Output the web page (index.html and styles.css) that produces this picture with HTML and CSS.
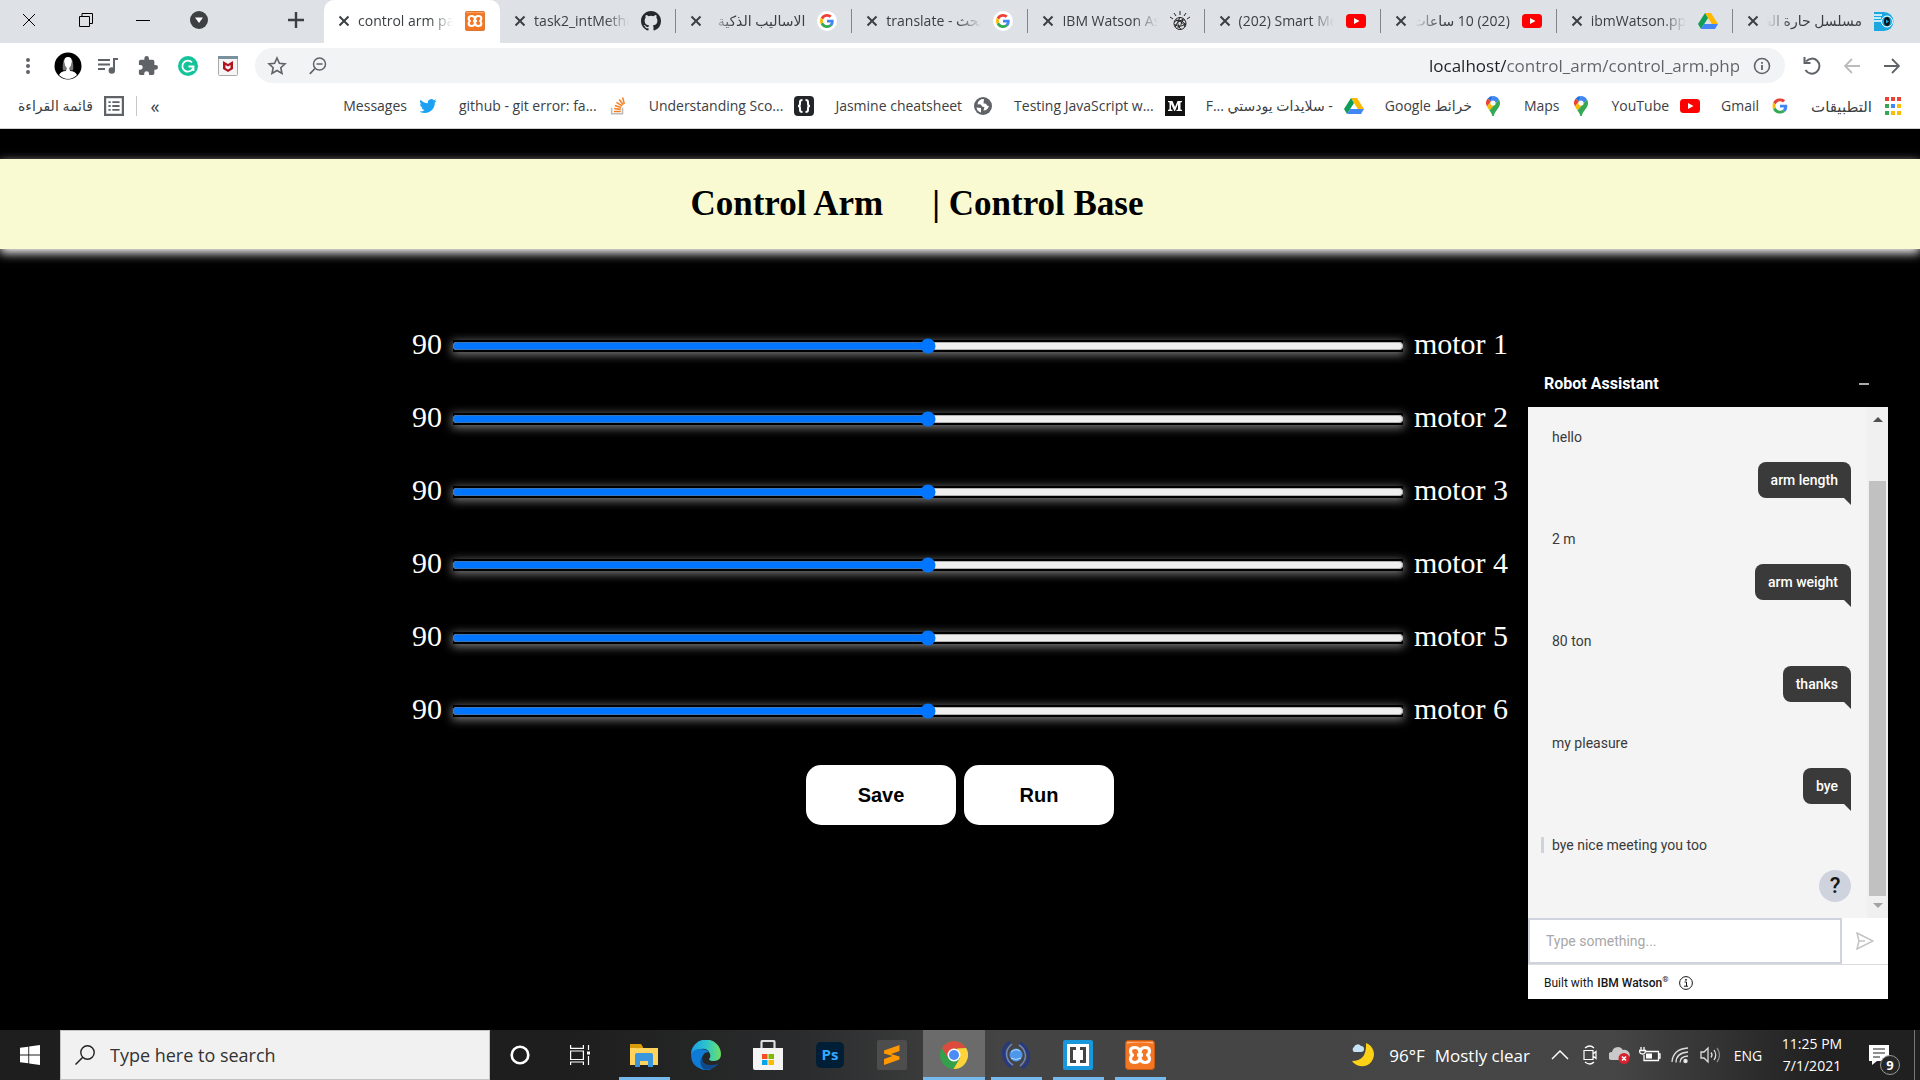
FILE: index.html
```html
<!DOCTYPE html>
<html lang="en">
<head>
<meta charset="utf-8">
<title>control arm page</title>
<link rel="stylesheet" href="styles.css">
</head>
<body>
<svg class="sprite" aria-hidden="true">
  <symbol id="i-close" viewBox="0 0 12 12"><path d="M1.5 1.5l9 9M10.500 1.500l-9 9" stroke="#3c4043" stroke-width="2" fill="none"/></symbol>
  <symbol id="i-google" viewBox="0 0 48 48"><path fill="#ea4335" d="M24 9.500c3.540 0 6.710 1.220 9.210 3.600l6.850-6.850C35.900 2.380 30.470 0 24 0 14.620 0 6.510 5.380 2.560 13.220l7.980 6.190C12.430 13.720 17.740 9.500 24 9.500z"/><path fill="#4285f4" d="M46.980 24.550c0-1.570-.15-3.090-.38-4.550H24v9.020h12.940c-.58 2.960-2.260 5.480-4.780 7.180l7.730 6c4.510-4.180 7.090-10.360 7.090-17.650z"/><path fill="#fbbc05" d="M10.530 28.590c-.48-1.450-.76-2.990-.76-4.590s.27-3.140.76-4.590l-7.980-6.190C.92 16.460 0 20.120 0 24c0 3.880.92 7.540 2.560 10.780l7.970-6.190z"/><path fill="#34a853" d="M24 48c6.480 0 11.930-2.130 15.890-5.810l-7.730-6c-2.150 1.450-4.920 2.300-8.160 2.300-6.260 0-11.570-4.220-13.470-9.910l-7.980 6.190C6.510 42.620 14.620 48 24 48z"/></symbol>
  <symbol id="i-gtab" viewBox="0 0 20 20"><circle cx="10" cy="10" r="10" fill="#fff"/><use href="#i-google" x="3" y="3" width="14" height="14"/></symbol>
  <symbol id="i-youtube" viewBox="0 0 20 20"><rect y="3" width="20" height="14" rx="3.500" fill="#f00"/><path d="M8 7l5.500 3L8 13z" fill="#fff"/></symbol>
  <symbol id="i-drive" viewBox="0 0 20 18"><path d="M7 1h6l7 11h-6.200z" fill="#ffba00"/><path d="M7 1L0 12l3 5L10 6z" fill="#0f9d58"/><path d="M6.200 12H20l-3 5H3z" fill="#4285f4"/></symbol>
  <symbol id="i-pin" viewBox="0 0 20 20"><path d="M10 0a7 7 0 0 0-5.300 2.400L8 5.500z" fill="#1a73e8"/><path d="M4.700 2.400A7 7 0 0 0 4 10.500L8 5.500z" fill="#ea4335"/><path d="M10 0a7 7 0 0 1 6 3.500L12 8.200 8 5.500z" fill="#4285f4"/><path d="M4 10.500l4-5 4 2.700-5.500 6.300C5.600 13.200 4.500 11.800 4 10.500z" fill="#fbbc04"/><path d="M16 3.500c2 3.500.8 6.500-1 9-2 2.800-3.500 4-4.200 7.500h-1.500c-.5-2.500-1.600-4-2.800-5.500z" fill="#34a853"/><circle cx="10" cy="7" r="2.600" fill="#fff"/></symbol>
  <symbol id="i-xampp" viewBox="0 0 30 30"><rect x=".5" y=".5" width="29" height="29" rx="3" fill="#f37623" stroke="#c65a10"/><path d="M2 2h26v1.500q-13-2-26 0z" fill="#ffb98a"/><path d="M15 13.500q0-6-5-6-4.500 0-4.500 3.700 0 2.300 2 3.800-2 1.500-2 3.800 0 3.700 4.500 3.700 5 0 5-6 0 6 5 6 4.500 0 4.500-3.700 0-2.300-2-3.800 2-1.500 2-3.800 0-3.700-4.500-3.700-5 0-5 6z" fill="none" stroke="#fff" stroke-width="3.200" stroke-linejoin="round"/><path d="M12 13.300h6v3.400h-6z" fill="#fff"/></symbol>
</svg>

<header class="browser">
  <div class="tabstrip">
    <div class="window-buttons">
      <button aria-label="Close window"><svg width="14" height="14" viewBox="0 0 14 14"><path d="M1 1l12 12M13 1L1 13" stroke="#000" fill="none"/></svg></button>
      <button aria-label="Restore"><svg width="14" height="14" viewBox="0 0 14 14"><path d="M.5 3.500h10v10H.5zM3 3.500V.5h10.500v10H11" stroke="#000" fill="none"/></svg></button>
      <button aria-label="Minimize"><svg width="14" height="14" viewBox="0 0 14 14"><path d="M0 7.500h14" stroke="#000"/></svg></button>
      <button class="search-tabs" aria-label="Search tabs"><svg width="18" height="18" viewBox="0 0 18 18"><circle cx="9" cy="9" r="9" fill="#3c4043"/><path d="M5 6.500h8L9 12z" fill="#fff"/></svg></button>
      <button class="new-tab" aria-label="New tab"><svg width="16" height="16" viewBox="0 0 16 16"><path d="M8 0v16M0 8h16" stroke="#3c4043" stroke-width="2.400"/></svg></button>
    </div>
    <nav class="tabs">
      <div class="tab active"><button aria-label="Close tab"><svg><use href="#i-close"/></svg></button><a href="#">control arm page</a><svg class="fav"><use href="#i-xampp"/></svg></div>
      <div class="tab"><button aria-label="Close tab"><svg><use href="#i-close"/></svg></button><a href="#">task2_intMethods</a><svg class="fav" viewBox="0 0 16 16"><path fill="#24292e" d="M8 0C3.580 0 0 3.580 0 8c0 3.540 2.290 6.530 5.470 7.590.4.070.55-.17.55-.38 0-.19-.01-.82-.01-1.490-2.010.37-2.530-.49-2.690-.94-.09-.23-.48-.94-.82-1.130-.28-.15-.68-.52-.01-.53.63-.01 1.080.58 1.230.82.72 1.210 1.870.87 2.330.66.070-.52.28-.87.51-1.070-1.780-.2-3.640-.89-3.640-3.950 0-.87.31-1.590.82-2.150-.08-.2-.36-1.020.08-2.120 0 0 .67-.21 2.200.82a7.600 7.600 0 0 1 4 0c1.530-1.040 2.200-.82 2.200-.82.44 1.100.16 1.920.08 2.120.51.560.82 1.270.82 2.150 0 3.070-1.870 3.750-3.650 3.950.29.25.54.73.54 1.480 0 1.070-.01 1.930-.01 2.200 0 .21.15.46.55.38A8.010 8.010 0 0 0 16 8c0-4.420-3.580-8-8-8z"/></svg></div>
      <div class="tab"><button aria-label="Close tab"><svg><use href="#i-close"/></svg></button><a href="#" dir="rtl">الاساليب الذكية</a><svg class="fav"><use href="#i-gtab"/></svg></div>
      <div class="tab"><button aria-label="Close tab"><svg><use href="#i-close"/></svg></button><a href="#">translate - بحث</a><svg class="fav"><use href="#i-gtab"/></svg></div>
      <div class="tab"><button aria-label="Close tab"><svg><use href="#i-close"/></svg></button><a href="#">IBM Watson Assistant</a><svg class="fav" viewBox="0 0 20 20" fill="none" stroke="#222"><circle cx="10" cy="12.500" r="6"/><path d="M4 11q6-5 12 3M5 16q3-8 10-7M6 9q8 2 9 7M10 6.500q-5 6 1 12M4.500 13.500q6 4 11-1M10 4V0M6 5L4 2M14 5l2-3M3 8L0 6M17 8l3-2M7 17.500q5-3 6-10"/></svg></div>
      <div class="tab"><button aria-label="Close tab"><svg><use href="#i-close"/></svg></button><a href="#">(202) Smart Methods</a><svg class="fav"><use href="#i-youtube"/></svg></div>
      <div class="tab"><button aria-label="Close tab"><svg><use href="#i-close"/></svg></button><a href="#" dir="rtl">(202) 10 ساعات من</a><svg class="fav"><use href="#i-youtube"/></svg></div>
      <div class="tab"><button aria-label="Close tab"><svg><use href="#i-close"/></svg></button><a href="#">ibmWatson.pptx</a><svg class="fav"><use href="#i-drive"/></svg></div>
      <div class="tab"><button aria-label="Close tab"><svg><use href="#i-close"/></svg></button><a href="#" dir="rtl">مسلسل حارة القبة</a><svg class="fav" viewBox="0 0 20 20"><path d="M0 1h10a9 9 0 0 1 0 19H0z" fill="#1ba8e0"/><path d="M0 4h8M0 7h7M0 10h7" stroke="#fff" stroke-width="1.500"/><circle cx="13" cy="10.500" r="5.500" fill="#1ba8e0" stroke="#fff"/><ellipse cx="13" cy="10.500" rx="3" ry="4.500" fill="#111"/><path d="M12 8.500l3 2-3 2z" fill="#1ba8e0"/></svg></div>
    </nav>
  </div>

  <div class="toolbar">
    <div class="extensions">
      <button aria-label="Menu"><svg width="20" height="20" viewBox="0 0 20 20" fill="#5f6368"><circle cx="10" cy="4" r="2"/><circle cx="10" cy="10" r="2"/><circle cx="10" cy="16" r="2"/></svg></button>
      <button aria-label="Profile"><svg width="28" height="28" viewBox="0 0 28 28"><circle cx="14" cy="14" r="13.500" fill="#000"/><path d="M5 23q2-4 7-4l.5-3Q10 14 10 10q0-5 4-5t4 5q0 4-2.500 6l.5 3q5 0 7 4-9 8-18 0z" fill="#fff"/><path d="M10 7q-2 7-1 11 2 1 3 0l.5-2Q10 13 10 7zM18 7q2 7 1 11-2 1-3 0l-.5-2Q18 13 18 7z" fill="#777"/></svg></button>
      <button aria-label="Media"><svg width="20" height="18" viewBox="0 0 20 18"><path d="M0 3h12M0 7.500h12M0 12h7M16 13V2h4" fill="none" stroke="#5f6368" stroke-width="2"/><circle cx="13.800" cy="13.500" r="3.200" fill="#5f6368"/></svg></button>
      <button aria-label="Extensions"><svg width="20" height="20" viewBox="1 1 22 22"><path fill="#5f6368" d="M20.500 11H19V7a2 2 0 0 0-2-2h-4V3.500a2.500 2.500 0 0 0-5 0V5H4a2 2 0 0 0-2 2v3.800h1.500a2.700 2.700 0 0 1 0 5.400H2V20c0 1.100.9 2 2 2h3.800v-1.500a2.700 2.700 0 0 1 5.400 0V22H17a2 2 0 0 0 2-2v-4h1.500a2.500 2.500 0 0 0 0-5z"/></svg></button>
      <button aria-label="Grammarly"><svg width="20" height="20" viewBox="0 0 20 20"><circle cx="10" cy="10" r="10" fill="#15c39a"/><path d="M14 6.500A5.500 5.500 0 1 0 15 12M15.500 15v-4.500H10.500" fill="none" stroke="#fff" stroke-width="1.800"/></svg></button>
      <button aria-label="Site protection"><svg width="20" height="20" viewBox="0 0 20 20"><rect x=".5" y=".5" width="19" height="19" rx="1" fill="#f5f5f5" stroke="#aaa"/><path d="M0 0h20v3H0z" fill="#7b929e"/><path d="M5 5l5 3 5-3v8l-5 3-5-3zM7.500 9v3l2.500 1.500 2.500-1.500V9L10 10.500z" fill="#b3121f" fill-rule="evenodd"/></svg></button>
    </div>
    <div class="omnibox">
      <button aria-label="Bookmark this page"><svg width="20" height="20" viewBox="0 0 20 20"><path d="M10 2l2.400 5.300 5.600.6-4.200 3.800L15 17.500l-5-3-5 3 1.200-5.800L2 7.900l5.600-.6z" fill="none" stroke="#5f6368" stroke-width="1.600"/></svg></button>
      <button class="zoom" aria-label="Zoom"><svg width="18" height="18" viewBox="0 0 18 18"><circle cx="10.500" cy="7" r="6" fill="none" stroke="#5f6368" stroke-width="1.500"/><path d="M6 11.500L.8 16.800M7.500 7h6" stroke="#5f6368" stroke-width="1.700"/></svg></button>
      <input class="url" type="text" aria-label="Address" value="localhost/control_arm/control_arm.php">
      <button aria-label="Site information"><svg width="18" height="18" viewBox="0 0 18 18"><circle cx="9" cy="9" r="7.500" fill="none" stroke="#5f6368" stroke-width="1.600"/><path d="M9 8v5M9 5v1.800" stroke="#5f6368" stroke-width="1.800"/></svg></button>
    </div>
    <div class="history">
      <button aria-label="Reload"><svg width="18" height="18" viewBox="0 0 18 18"><path d="M3 4.500A7.500 7.500 0 1 1 2.500 13M1.500 0v6h6" fill="none" stroke="#5f6368" stroke-width="2"/></svg></button>
      <button aria-label="Forward"><svg width="16" height="16" viewBox="0 0 16 16"><path d="M16 8H1.500M8 1L1 8l7 7" fill="none" stroke="#babcbe" stroke-width="1.800"/></svg></button>
      <button aria-label="Back"><svg width="16" height="16" viewBox="0 0 16 16"><path d="M0 8h14.500M8 1l7 7-7 7" fill="none" stroke="#5f6368" stroke-width="1.800"/></svg></button>
    </div>
  </div>

  <nav class="bookmarks">
    <a class="reading" href="#"><span dir="rtl">قائمة القراءة</span><svg viewBox="0 0 18 18"><path d="M1 1h16v16H1z" fill="none" stroke="#5f6368" stroke-width="2"/><path d="M4 5.500h2M7.500 5.500H14M4 9h2M7.500 9H14M4 12.500h2M7.500 12.500H14" stroke="#5f6368" stroke-width="1.600"/></svg></a>
    <button class="more" aria-label="More bookmarks">«</button>
    <div class="bookmark-list">
      <a href="#"><span>Messages</span><svg viewBox="-2 -2 28 28"><path fill="#1da1f2" d="M23.950 4.570a10 10 0 0 1-2.820.77 4.960 4.960 0 0 0 2.160-2.720c-.95.550-2 .95-3.130 1.180a4.920 4.920 0 0 0-8.380 4.480C7.690 8.100 4.070 6.130 1.640 3.160a4.920 4.920 0 0 0 1.520 6.570 4.900 4.900 0 0 1-2.230-.61v.06a4.920 4.920 0 0 0 3.950 4.830 5 5 0 0 1-2.210.08 4.940 4.940 0 0 0 4.600 3.420A9.870 9.870 0 0 1 0 19.540a14 14 0 0 0 7.550 2.210c9.050 0 14-7.500 14-13.990 0-.21 0-.42-.02-.63a9.900 9.900 0 0 0 2.420-2.560z"/></svg></a>
      <a href="#"><span>github - git error: fa...</span><svg viewBox="-1 -1 22 22" fill="none"><path d="M3 12v6.500h12V12" stroke="#bcbbbb" stroke-width="1.700"/><path d="M5.500 16h7.500M5.700 12.800l7.300.9M6.500 9.500l7 2.200M8.300 6l6.200 3.900M11.300 2.800l4.500 5.900M15 .5l2 7.200" stroke="#f48024" stroke-width="1.700"/></svg></a>
      <a href="#"><span>Understanding Sco...</span><svg viewBox="0 0 20 20"><rect width="20" height="20" rx="4" fill="#222629"/><path d="M8.500 4q-2.500 0-2.500 2v2q0 2-2 2 2 0 2 2v2q0 2 2.500 2M11.500 4Q14 4 14 6v2q0 2 2 2-2 0-2 2v2q0 2-2.500 2" fill="none" stroke="#fff" stroke-width="2"/></svg></a>
      <a href="#"><span>Jasmine cheatsheet</span><svg viewBox="0 0 20 20"><circle cx="10" cy="10" r="9" fill="#5f6368"/><path d="M11 3q-6 0-6.500 5.500 3-1 4 1t3 1.500l-1 3.500q4 0 5.500-4.500-2 0-2.500-1.500t-3-1zM3.500 11.500l4.500.5v4.500q-4-1-4.500-5z" fill="#fff"/></svg></a>
      <a href="#"><span>Testing JavaScript w...</span><svg viewBox="0 0 20 20"><path d="M0 0h20v20H0z" fill="#111"/><path d="M3 5h4.500L10 11l2.500-6H17v1l-1.500.5v7L17 14v1h-5.500v-1l1.500-.5V8l-3 7h-.7L6 8v5.200L7.500 14v1H3v-1l1.500-.8V6.500L3 6z" fill="#fff"/></svg></a>
      <a href="#"><span dir="rtl">- سلايدات يودستي <bdi dir="ltr">F...</bdi></span><svg><use href="#i-drive"/></svg></a>
      <a href="#"><span dir="rtl">خرائط Google</span><svg><use href="#i-pin"/></svg></a>
      <a href="#"><span>Maps</span><svg><use href="#i-pin"/></svg></a>
      <a href="#"><span>YouTube</span><svg><use href="#i-youtube"/></svg></a>
      <a href="#"><span>Gmail</span><svg viewBox="-3 -3 26 26"><use href="#i-google" width="20" height="20"/></svg></a>
      <a href="#"><span class="arabic" dir="rtl">التطبيقات</span><svg viewBox="0 0 20 20"><path d="M2 1h4v4H2zM8 1h4v4H8zM14 1h4v4h-4z" fill="#ea4335"/><path d="M2 8h4v4H2zM2 15h4v4H2z" fill="#34a853"/><path d="M8 8h4v4H8z" fill="#4285f4"/><path d="M14 8h4v4h-4zM8 15h4v4H8zM14 15h4v4h-4z" fill="#fbbc04"/></svg></a>
    </div>
  </nav>
</header>

<main class="page">
  <nav class="banner">
    <a href="#">Control Arm</a>
    <a class="base" href="#">| Control Base</a>
  </nav>
  <form class="motors">
    <div class="motor"><output>90</output><input id="m1" type="range" min="0" max="180" value="90"><label for="m1">motor 1</label></div>
    <div class="motor"><output>90</output><input id="m2" type="range" min="0" max="180" value="90"><label for="m2">motor 2</label></div>
    <div class="motor"><output>90</output><input id="m3" type="range" min="0" max="180" value="90"><label for="m3">motor 3</label></div>
    <div class="motor"><output>90</output><input id="m4" type="range" min="0" max="180" value="90"><label for="m4">motor 4</label></div>
    <div class="motor"><output>90</output><input id="m5" type="range" min="0" max="180" value="90"><label for="m5">motor 5</label></div>
    <div class="motor"><output>90</output><input id="m6" type="range" min="0" max="180" value="90"><label for="m6">motor 6</label></div>
    <div class="actions"><button type="button">Save</button><button type="button">Run</button></div>
  </form>

  <section class="chat">
    <header><h2>Robot Assistant</h2><button aria-label="Minimize chat"><svg width="10" height="2"><path d="M0 0h10v2H0z" fill="#aaa"/></svg></button></header>
    <div class="chat-body">
      <div class="messages">
        <p class="bot">hello</p>
        <p class="user">arm length</p>
        <p class="bot">2 m</p>
        <p class="user">arm weight</p>
        <p class="bot">80 ton</p>
        <p class="user">thanks</p>
        <p class="bot">my pleasure</p>
        <p class="user">bye</p>
        <p class="bot latest">bye nice meeting you too</p>
        <button class="help" aria-label="Help">?</button>
      </div>
      <div class="scrollbar"><i class="up"></i><i class="thumb"></i><i class="down"></i></div>
    </div>
    <div class="compose"><input type="text" aria-label="Message" placeholder="Type something..."><button aria-label="Send"><svg width="18" height="18" viewBox="0 0 18 18"><path d="M1 1l16 8L1 17l2-8zM3 9h6" fill="none" stroke="#c3c3c3" stroke-width="1.500"/></svg></button></div>
    <footer>Built with <b>IBM Watson<sup>®</sup></b><svg width="14" height="14" viewBox="0 0 14 14"><circle cx="7" cy="7" r="6.400" fill="none" stroke="#161616"/><path d="M5.500 6h2v4M5 10.200h4" fill="none" stroke="#161616"/><circle cx="7" cy="3.800" r=".9"/></svg></footer>
  </section>
</main>

<footer class="taskbar">
  <button class="start" aria-label="Start"><svg width="20" height="20" viewBox="0 0 20 20"><path d="M0 2.800L8.300 1.700v7.800H0zM9.200 1.500L20 0v9.500H9.200zM0 10.500h8.300v7.800L0 17.200zM9.200 10.500H20V20L9.200 18.500z" fill="#fff"/></svg></button>
  <label class="search"><svg width="20" height="20" viewBox="0 0 20 20"><circle cx="12.500" cy="7.500" r="6.700" fill="none" stroke="#222" stroke-width="1.400"/><path d="M7.800 12.200L.5 19.500" stroke="#222" stroke-width="1.500"/></svg><input type="text" aria-label="Search" placeholder="Type here to search"></label>
  <button class="system" aria-label="Cortana"><svg width="20" height="20" viewBox="0 0 20 20"><circle cx="10" cy="10" r="8.300" fill="none" stroke="#fff" stroke-width="2.600"/></svg></button>
  <button class="system" aria-label="Task view"><svg width="20" height="20" viewBox="0 0 20 20" fill="none" stroke="#fff" stroke-width="1.200"><path d="M.6 0v3.400h12.800V0M.6 6h12.800v8.500H.6zM.6 20v-3h12.800v3M18.500 0v5M18.500 11v9"/><path d="M17 6.500h3v3h-3z" fill="#fff" stroke="none"/></svg></button>
  <nav class="apps">
    <button class="open" aria-label="File Explorer"><svg width="28" height="26" viewBox="0 0 28 26"><path d="M0 2h11l2 3v4H0z" fill="#d99a0b"/><path d="M0 6h28v17H0z" fill="#ffd35c"/><path d="M5 25V13q0-2 2-2h14q2 0 2 2v12h-5v-6h-8v6z" fill="#3a96dd"/></svg></button>
    <button aria-label="Edge"><svg width="30" height="30" viewBox="0 0 30 30"><defs><linearGradient id="edge-top" x1="0" x2="1"><stop stop-color="#1b9de2"/><stop offset=".5" stop-color="#2cc3cf"/><stop offset="1" stop-color="#6ee063"/></linearGradient></defs><path d="M0 15A15 15 0 0 1 30 14q0 7-7 7-5 0-5-2 2-2 1-5Q17 8 10 9q-8 1-10 6z" fill="url(#edge-top)"/><path d="M0 15q2-7 10-6 5 0 8 3-6 0-7 6 0 9 10 11Q16 31 11 29.500 0 26 0 15z" fill="#0f7bd5"/><path d="M11 17q0 9 10 8 4 0 7-2-6 8-15 6.500Q7 24 11 17z" fill="#114a8b"/></svg></button>
    <button aria-label="Microsoft Store"><svg width="30" height="30" viewBox="0 0 30 30"><path d="M8.500 9V2q0-1 1-1h11q1 0 1 1v7" fill="none" stroke="#ddd" stroke-width="2.200"/><path d="M0 8h30v22H2q-2 0-2-2z" fill="#f4f4f4"/><path d="M9 14h5.500v5H9z" fill="#f25022"/><path d="M15.500 14H21v5h-5.500z" fill="#7fba00"/><path d="M9 20h5.500v5H9z" fill="#00a4ef"/><path d="M15.500 20H21v5h-5.500z" fill="#ffb900"/></svg></button>
    <button aria-label="Photoshop"><span class="ps">Ps</span></button>
    <button aria-label="Sublime Text"><svg width="30" height="30" viewBox="0 0 30 30"><rect width="30" height="30" rx="2" fill="#4d4d4d"/><path d="M7 10.500L22.500 5v6L14 14l8.500 2.500v3L7 25v-6l8.500-3L7 13.500z" fill="#ff9800"/></svg></button>
    <button class="current" aria-label="Chrome"><svg width="28" height="28" viewBox="0 0 28 28"><circle cx="14" cy="14" r="14" fill="#34a04b"/><path d="M1.900 7A14 14 0 0 1 26.100 7L14 8l-6 9z" fill="#dd4b3e"/><path d="M26.100 7A14 14 0 0 1 13.500 28l6.500-11-3-9.500z" fill="#fdd23b"/><circle cx="14" cy="14" r="6.500" fill="#fff"/><circle cx="14" cy="14" r="5" fill="#4a8bf5"/></svg></button>
    <button class="open" aria-label="Network tool"><svg width="30" height="30" viewBox="0 0 30 30" fill="none"><path d="M9 2Q0 8 3 17q2 7 8 10M21 28q9-6 6-15-2-7-8-10" stroke="#273a80" stroke-width="3"/><path d="M11 4Q4 10 6 17q1 5 6 8M19 26q7-6 5-13-1-5-6-8" stroke="#6f86bd" stroke-width="1.500"/><circle cx="15" cy="15" r="6.500" fill="#4f97ea"/><path d="M10 12q5-4 9-1M10 18q5 3 10 0" stroke="#b9dcff"/></svg></button>
    <button class="open" aria-label="Brackets"><svg width="30" height="30" viewBox="0 0 30 30"><rect width="30" height="30" rx="2" fill="#1897dc"/><path d="M4 4h22v22H4z" fill="#fff"/><path d="M7 7h6v3h-3v10h3v3H7zM17 7h6v16h-6v-3h3V10h-3z" fill="#444"/></svg></button>
    <button class="open" aria-label="XAMPP"><svg width="30" height="30"><use href="#i-xampp"/></svg></button>
  </nav>
  <div class="tray">
    <button class="weather"><svg width="24" height="24" viewBox="0 0 24 24"><path d="M15 0A12 12 0 1 1 1 18Q16 18 15 0z" fill="#fcd116"/><path d="M3 9a3 3 0 0 1 0-5 4 4 0 0 1 7-1 3 3 0 0 1 0 6z" fill="#c5e3f7"/></svg><span>96°F</span><span>Mostly clear</span></button>
    <div class="status">
      <button aria-label="Hidden icons"><svg width="18" height="18" viewBox="0 0 18 18"><path d="M1 13l8-8 8 8" fill="none" stroke="#fff" stroke-width="1.500"/></svg></button>
      <button aria-label="Meet now"><svg width="18" height="20" viewBox="0 0 18 20" fill="none" stroke="#fff" stroke-width="1.200"><path d="M3 5.500h9v9H3zM12 9l3-2.500v7L12 11M4 3q5-4 9 0M4 17q5 4 9 0"/></svg></button>
      <button aria-label="Cloud sync error"><svg width="22" height="18" viewBox="0 0 22 18"><path d="M3 14a4 4 0 0 1 0-8 6 6 0 0 1 11-2 5 5 0 0 1 3 10z" fill="#c9c9c9"/><circle cx="15" cy="12.500" r="5.500" fill="#d8212f"/><path d="M13 10.500l4 4M17 10.500l-4 4" stroke="#fff" stroke-width="1.600"/></svg></button>
      <button aria-label="Battery"><svg width="22" height="16" viewBox="0 0 22 16" fill="none" stroke="#fff" stroke-width="1.300"><path d="M7 4.500h12.500v9H5V8M19.500 7h1.500v4h-1.500M2 0v3M5 0v3M.5 3.500h6Q6.500 7 3.500 7T.5 3.500z"/><path d="M7 6.500h6v5H7z" fill="#fff" stroke="none"/></svg></button>
      <button aria-label="Wi-Fi"><svg width="18" height="18" viewBox="0 0 18 18" fill="none" stroke="#ddd" stroke-width="1.300"><path d="M1 16Q2 3 17 2M5 16.500Q5 7 17 6M9 16.500q0-6 8-6.500"/><circle cx="14.500" cy="15" r="1.600" fill="#fff"/></svg></button>
      <button aria-label="Volume"><svg width="20" height="18" viewBox="0 0 20 18" fill="none" stroke="#ddd" stroke-width="1.300"><path d="M1 6h3l4-4v14l-4-4H1zM11 6.500q2 2.500 0 5M14 4q3.500 5 0 10"/><path d="M17 2q5 7 0 14" stroke="#888"/></svg></button>
    </div>
    <button class="language">ENG</button>
    <button class="clock"><span>11:25 PM</span><span>7/1/2021</span></button>
    <button class="notices" aria-label="Notifications"><svg width="20" height="20" viewBox="0 0 20 20"><path d="M0 0h20v16H8l-5 4v-4H0z" fill="#fff"/><path d="M4 4h12M4 8h12M4 12h7" stroke="#222" stroke-width="1.200"/></svg><b>9</b></button>
  </div>
</footer>
</body>
</html>
```
FILE: styles.css
```css
* { box-sizing: border-box; }

body {
  margin: 0;
  min-height: 100vh;
  display: flex;
  flex-direction: column;
  background: #000;
  font-family: "Open Sans", "Noto Sans", "DejaVu Sans", sans-serif;
}

button {
  display: flex;
  align-items: center;
  justify-content: center;
  padding: 0;
  border: 0;
  background: none;
  font: inherit;
  color: inherit;
}

a { color: inherit; text-decoration: none; }
svg { flex: none; display: block; }
.sprite { position: absolute; width: 0; height: 0; }

/* Browser frame */
.browser { background: #fff; border-bottom: 1px solid #cfd1d5; color: #3c4043; }

.tabstrip { display: flex; height: 43px; padding-right: 11px; background: #dee1e6; }
.window-buttons { display: flex; width: 324px; flex: none; height: 40px; }
.window-buttons button { width: 57px; }
.window-buttons .search-tabs { width: 56px; }
.window-buttons .new-tab { width: 56px; margin-left: auto; }

.tabs { display: flex; flex: 1; min-width: 0; }
.tab {
  display: flex;
  flex: 1 1 0;
  min-width: 0;
  align-items: center;
  gap: 8px;
  padding: 0 15px 2px 14px;
  font-size: 14px;
  background: linear-gradient(#80868b, #80868b) right 0 top 9px / 1px 24px no-repeat;
}
.tab:last-child { background: none; }
.tab.active { background: #fff; border-radius: 10px 10px 0 0; }
.tab button svg { width: 12px; height: 12px; }
.tab a {
  flex: 1;
  overflow: hidden;
  white-space: nowrap;
  mask-image: linear-gradient(90deg, #000 75%, transparent);
}
.tab a[dir="rtl"] { mask-image: linear-gradient(270deg, #000 75%, transparent); }
.fav { width: 20px; height: 20px; margin-left: 4px; }

.toolbar { display: flex; align-items: center; height: 45px; }
.extensions { display: flex; width: 255px; padding-left: 8px; }
.extensions button { width: 40px; height: 28px; }
.omnibox {
  display: flex;
  flex: 1;
  align-items: center;
  gap: 14px;
  height: 35px;
  padding: 0 14px 0 12px;
  border-radius: 18px;
  background: #f1f3f4;
}
.zoom { margin-left: 8px; }
.url {
  flex: none;
  width: 310px;
  margin-left: auto;
  padding: 0;
  border: 0;
  font: 17px "Open Sans", sans-serif;
  background: linear-gradient(90deg, #202124 77px, #5f6368 77px);
  -webkit-background-clip: text;
  background-clip: text;
  color: transparent;
}
.history { display: flex; width: 135px; padding-left: 7px; }
.history button { width: 40px; }

.bookmarks { display: flex; align-items: center; height: 40px; padding: 0 17px 5px 18px; font-size: 14px; }
.bookmarks a { display: flex; align-items: center; gap: 11px; white-space: nowrap; }
.bookmarks svg { width: 20px; height: 20px; }
.bookmarks .reading { gap: 11px; padding-right: 12px; border-right: 1px solid #c6c8cb; }
.bookmarks .arabic { font-size: 15px; }
.more { width: 36px; font-size: 18px; }
.bookmark-list { display: flex; justify-content: flex-end; flex: 1; gap: 21px; }

/* Control page */
.page { position: relative; flex: 1; padding-top: 30px; font-family: "Liberation Serif", serif; }
.banner {
  display: flex;
  align-items: center;
  justify-content: center;
  gap: 49px;
  height: 90px;
  padding-right: 86px;
  background: #fafad2;
  box-shadow: 0 4px 10px #fff;
  font-size: 35px;
  font-weight: bold;
  color: #000;
}
.motors { display: flex; flex-direction: column; align-items: center; padding-top: 60px; color: #fff; font-size: 30px; }
.motor { display: flex; align-items: center; justify-content: center; gap: 10px; width: 100%; height: 73px; }
.motor output, .motor label { padding-bottom: 4px; }
.motor input {
  width: 50%;
  max-width: 952px;
  height: 14px;
  margin: 0;
  box-shadow: 0 2px 10px #fff7;
}
.actions { display: flex; gap: 8px; padding-top: 18px; }
.actions button {
  width: 150px;
  height: 60px;
  border-radius: 15px;
  background: #fff;
  color: #000;
  font: bold 20px "Liberation Sans", Arial, sans-serif;
}

/* Chat widget */
.chat {
  position: absolute;
  right: 32px;
  bottom: 31px;
  width: 360px;
  background: #fff;
  font: 14px/20px Roboto, sans-serif;
  color: #3a3a3a;
}
.chat header {
  display: flex;
  align-items: center;
  justify-content: space-between;
  height: 49px;
  padding: 2px 19px 0 16px;
  background: #000;
  color: #fff;
}
.chat h2 { margin: 0; font-size: 16px; }
.chat-body { display: flex; background: #f4f4f4; }
.messages { display: flex; flex-direction: column; flex: 1; padding: 20px 16px 16px 13px; }
.messages p { margin: 0; }
.bot { align-self: flex-start; padding-left: 11px; }
.user {
  position: relative;
  align-self: flex-end;
  padding: 8px 13px;
  border-radius: 8px 8px 0 8px;
  background: #3a3a3a;
  color: #fff;
  font-weight: 500;
}
.messages .user { margin: 15px 0 31px; }
.user::after {
  content: "";
  position: absolute;
  right: 0;
  top: 100%;
  border-top: 7px solid #3a3a3a;
  border-left: 7px solid transparent;
}
.latest { background: linear-gradient(#cfd3dd, #cfd3dd) left center / 3px 16px no-repeat; }
.help {
  align-self: flex-end;
  width: 32px;
  height: 32px;
  margin-top: 15px;
  border-radius: 50%;
  background: #cfd3dd;
  color: #161616;
  font-size: 22px;
  font-weight: 500;
}
.scrollbar { display: flex; flex-direction: column; align-items: center; width: 21px; padding: 10px 0; background: #f0f0f0; }
.up { border: 5px solid transparent; border-top: 0; border-bottom-color: #505050; }
.down { border: 5px solid transparent; border-bottom: 0; border-top-color: #a3a3a3; }
.thumb { flex: 1; width: 17px; margin: 59px 0 7px; background: #c1c1c1; }
.compose { display: flex; height: 47px; border-bottom: 1px solid #dcdcdc; }
.compose input {
  flex: 1;
  min-width: 0;
  padding: 0 16px;
  border: 2px solid #cfd3dd;
  background: #fff;
  font: 14px Roboto, sans-serif;
}
.compose input::placeholder { color: #a8a8a8; }
.compose button { width: 46px; }
.chat footer { display: flex; align-items: center; gap: 4px; height: 34px; padding: 2px 0 0 16px; font-size: 12px; color: #161616; }
.chat footer b { font-weight: 500; }
.chat footer sup { font-size: 8px; line-height: 8px; }
.chat footer svg { margin-left: 6px; }

/* Taskbar */
.taskbar {
  display: flex;
  height: 50px;
  background: linear-gradient(90deg, #1e1e1e 30%, #2b2c2d 42%, #444 52%, #464646 84%, #202020 95%);
  color: #fff;
}
.start, .system { width: 60px; }
.search {
  display: flex;
  align-items: center;
  gap: 15px;
  width: 430px;
  padding-left: 14px;
  border: 1px solid #c4c4c4;
  background: #f1f1f1;
}
.search input { flex: 1; min-width: 0; padding: 0; border: 0; background: none; font: 18px "Open Sans", sans-serif; }
.search input::placeholder { color: #333; }
.apps { display: flex; padding-left: 3px; }
.apps button { width: 62px; }
.apps .open { background: linear-gradient(#76b9ed, #76b9ed) center bottom / 51px 3px no-repeat; }
.apps .current { background: #6b6b6b; border-bottom: 3px solid #76b9ed; padding-top: 3px; }
.ps {
  width: 28px;
  height: 26px;
  border-radius: 5px;
  background: #001e36;
  color: #31a8ff;
  font: bold 15px/25px "Open Sans", sans-serif;
}
.tray { display: flex; margin-left: auto; margin-right: 5px; padding-right: 12px; border-right: 1px solid #777; }
.weather { gap: 10px; font-size: 17px; white-space: nowrap; }
.weather svg { margin-right: 4px; }
.status { display: flex; padding: 0 3px 0 15px; }
.status button { width: 30px; }
.language { width: 40px; font-size: 14px; }
.clock { flex-direction: column; width: 88px; font-size: 14px; line-height: 22px; }
.notices { position: relative; width: 46px; }
.notices b {
  position: absolute;
  right: 2px;
  bottom: 5px;
  width: 20px;
  height: 20px;
  border: 1px solid #999;
  border-radius: 50%;
  background: #262626;
  font-size: 13px;
  line-height: 18px;
}
```
